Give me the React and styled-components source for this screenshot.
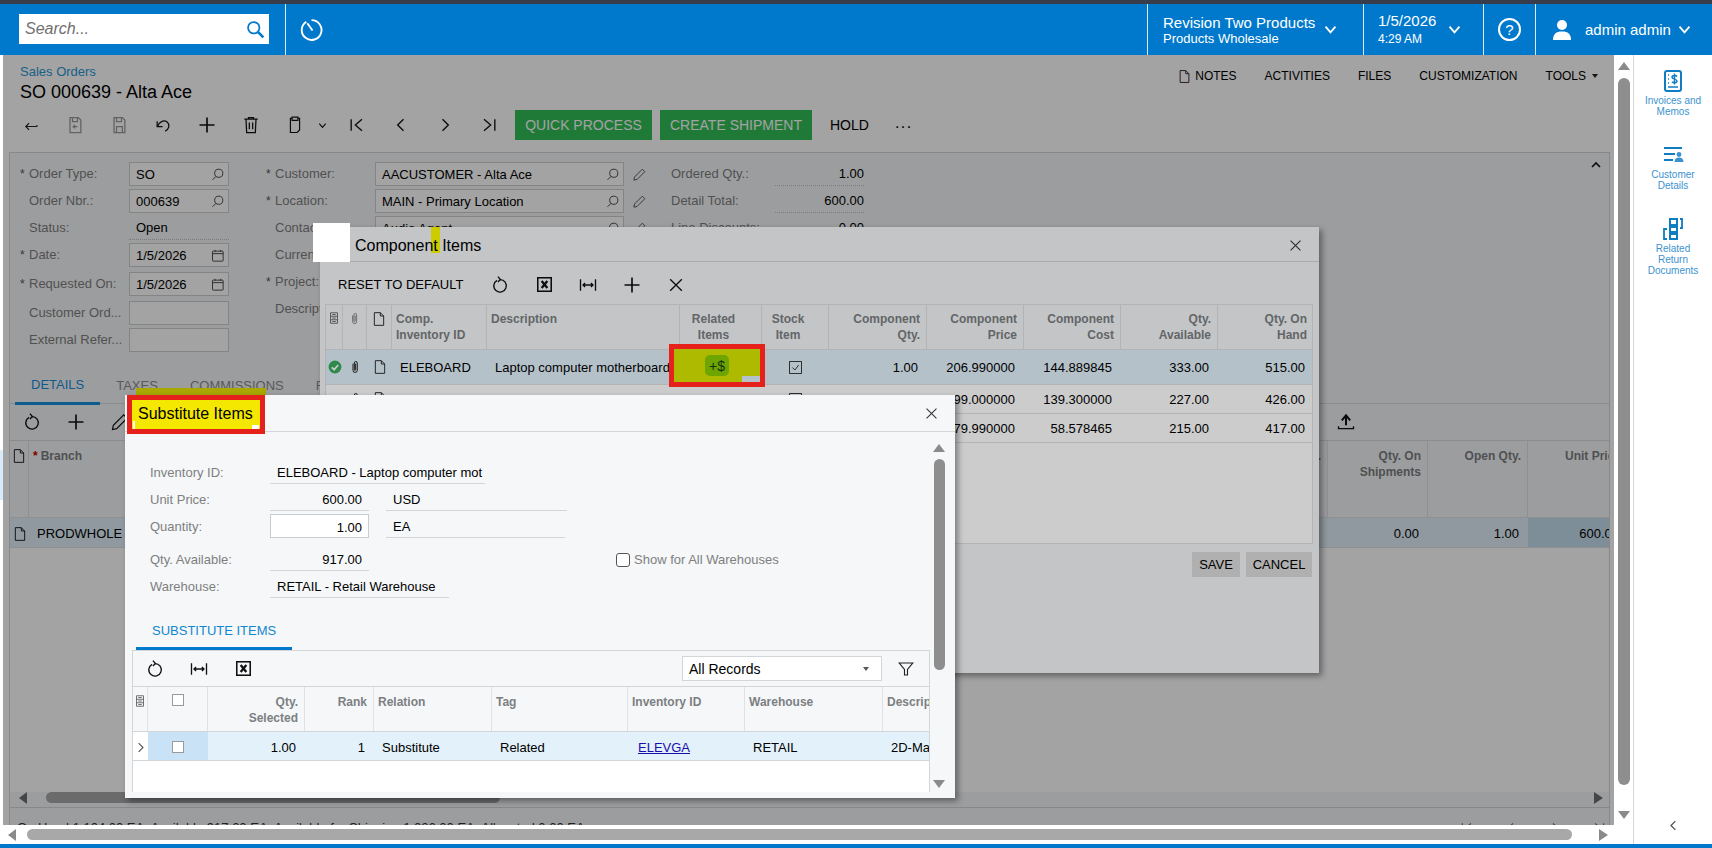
import React from 'react';
import styled, { createGlobalStyle } from 'styled-components';

const Global = createGlobalStyle`
  html, body { margin: 0; padding: 0; background: #fff; overflow: hidden; }
  * { box-sizing: border-box; }
  body { font-family: "Liberation Sans", Arial, sans-serif; font-size: 13px; color: #000; }
`;

const Screen = styled.div`width: 1712px; height: 848px; display: flex; flex-direction: column; overflow: hidden;`;
const TopStrip = styled.div`height: 4px; background: #383d49; flex: none;`;
const Header = styled.header`height: 51px; flex: none; background: #0079cc; display: flex; align-items: stretch; color: #fff;`;
const SearchWrap = styled.div`margin: 10px 16px 11px 19px; width: 250px; height: 30px; background: #fff; display: flex; align-items: center; justify-content: space-between; padding: 0 3px 0 6px;`;
const SearchHint = styled.span`font-style: italic; font-size: 16px; color: #707070;`;
const HeadSection = styled.div`
  width: ${p => p.$w}px; flex: none; border-left: 1px solid rgba(255,255,255,.85);
  display: flex; align-items: center; justify-content: ${p => p.$center ? 'center' : 'flex-start'};
  padding-left: ${p => p.$pl || 0}px; gap: ${p => p.$gap || 0}px;
`;
const HeadSpacer = styled.div`flex: 1;`;
const HeadStack = styled.div`display: flex; flex-direction: column; width: ${p => p.$w}px; margin-top: ${p => p.$mt || 0}px;`;
const HeadMain = styled.span`font-size: ${p => p.$s || 15}px; line-height: ${p => p.$lh || 17}px; white-space: nowrap;`;
const UserSlot = styled.span`margin-right: 6px; display: flex;`;
const HelpRing = styled.span`width: 23px; height: 23px; border: 2px solid #fff; border-radius: 50%; display: flex; align-items: center; justify-content: center; font-size: 15px;`;

const Middle = styled.div`flex: 1; display: flex; min-height: 0;`;
const LeftStack = styled.div`width: 1614px; display: flex; flex-direction: column; flex: none;`;
const ContentRow = styled.div`height: 770px; display: flex; flex: none;`;
const Gutter = styled.div`width: 3px; flex: none; background: #fff; padding-top: 395px;`;
const GutterMark = styled.div`height: 50px; background: #d9ebf8;`;
const Content = styled.main`position: relative; flex: 1; background: #fff; overflow: hidden;`;

const PageHead = styled.div`height: 55px; display: flex; justify-content: space-between;`;
const Titles = styled.div`padding: 9px 0 0 17px;`;
const Crumb = styled.div`color: #2b97d6; font-size: 13px; line-height: 16px;`;
const Title = styled.h1`margin: 1px 0 0; font-size: 18px; font-weight: 400; line-height: 22px;`;
const TopLinks = styled.div`display: flex; gap: 28px; padding: 13px 16px 0 0; align-items: flex-start;`;
const TopLink = styled.span`font-size: 12px; line-height: 16px; display: flex; align-items: center; gap: ${p => p.$gap || 0}px;`;
const Caret = styled.i`
  display: inline-block; width: 0; height: 0; border-left: 3.5px solid transparent; border-right: 3.5px solid transparent;
  border-top: 4px solid ${p => p.$c || '#222'};
`;

const Toolbar = styled.div`height: 30px; display: flex; align-items: center; padding-left: 6px;`;
const ToolIcon = styled.span`width: ${p => p.$w || 44}px; height: 100%; flex: none; display: flex; align-items: center; justify-content: ${p => p.$start ? 'flex-start' : 'center'};`;
const GreenBtn = styled.span`
  height: 30px; width: ${p => p.$w}px; margin-left: ${p => p.$ml}px; background: #32c057; color: #fff; flex: none;
  display: flex; align-items: center; justify-content: center; font-size: 14px;
`;
const TextBtn = styled.span`font-size: 14px; margin-left: 18px;`;
const Dots = styled.span`margin-left: 26px; font-size: 16px; letter-spacing: 1.5px; font-weight: 400; line-height: 10px; margin-top: -4px;`;

const Panel = styled.section`margin: 12px 4px 0 6px; border: 1px solid #d6d6d6; background: #f6f7f9; height: 720px; display: flex; flex-direction: column;`;
const FormArea = styled.div`height: 214px; flex: none; display: flex; padding: 9px 5px 0 10px;`;
const FormCol = styled.div`width: ${p => p.$w}px; margin-left: ${p => p.$ml || 0}px; flex: none;`;
const FormRow = styled.div`height: 27px; margin-top: ${p => p.$mt || 0}px; display: flex; align-items: flex-start;`;
const Star = styled.span`width: 9px; flex: none; line-height: 24px; font-size: 12px; color: #555;`;
const Label = styled.span`width: ${p => p.$w}px; flex: none; color: #7f7f7f; line-height: 24px; white-space: nowrap; overflow: hidden;`;
const InputBox = styled.span`
  width: ${p => p.$w}px; height: 24px; flex: none; border: 1px solid #cfcfcf; background: #fff; padding: 0 3px 0 6px;
  display: flex; align-items: center; justify-content: space-between; white-space: nowrap;
`;
const PlainValue = styled.span`
  width: ${p => p.$w}px; height: 24px; flex: none; border-bottom: 1px dotted #c4c4c4; padding: 0 ${p => p.$right ? 0 : 7}px;
  display: flex; align-items: center; justify-content: ${p => p.$right ? 'flex-end' : 'flex-start'};
`;
const SideIcon = styled.span`margin-left: 7px; width: 16px; height: 24px; display: flex; align-items: center; justify-content: center;`;
const Collapse = styled.span`margin-left: auto; margin-top: -5px;`;

const TabBar = styled.div`height: 37px; flex: none; display: flex; padding-left: ${p => p.$pl}px; border-bottom: 1px solid ${p => p.$line || '#dcdcdc'};`;
const Tab = styled.span`
  padding: 0 16px; display: flex; align-items: center; font-size: 13px; height: ${p => p.$active ? '38px' : '37px'};
  color: ${p => p.$active ? '#1a8fdb' : '#8c8c8c'}; border-bottom: ${p => p.$active ? '3px solid #1592df' : 'none'}; white-space: nowrap;
`;
const GridTools = styled.div`height: 37px; flex: none; display: flex; align-items: center; border-bottom: 1px solid #dcdcdc;`;
const ToolEnd = styled.span`margin-left: auto; margin-right: 241px; display: flex;`;
const DataRow = styled.div`
  --cell-top: ${p => p.$tp || 0}px;
  display: grid; grid-template-columns: ${p => p.$cols}; height: ${p => p.$h}px; flex: none; background: ${p => p.$bg || 'transparent'};
  border-bottom: 1px solid ${p => p.$line || '#dfe2e5'};
`;
const HeadCell = styled.div`
  padding: var(--head-top, 6px) ${p => p.$center ? 14 : 6}px 0 ${p => p.$center ? 0 : 4}px;
  font-size: 12px; line-height: 16px; font-weight: 700; color: #7c7f82; text-align: ${p => p.$right ? 'right' : p.$center ? 'center' : 'left'};
  border-right: 1px solid #dfe2e5; white-space: pre-line; overflow: hidden; display: ${p => p.$icon ? 'flex' : 'block'};
  justify-content: center;
  ${p => p.$icon ? 'padding-left: 0; padding-right: 0;' : ''}
`;
const Cell = styled.div`
  display: flex; align-items: center; white-space: nowrap; overflow: hidden; background: ${p => p.$bg || 'transparent'};
  justify-content: ${p => p.$right ? 'flex-end' : p.$center ? 'center' : 'flex-start'};
  padding: var(--cell-top, 0) ${p => p.$right ? 9 : p.$center ? 0 : 8}px 0;
`;
const RedMark = styled.span`color: #c00; margin-right: 3px;`;
const GridFill = styled.div`flex: 1; min-height: 0;`;
const Grid = styled.div`flex: none; display: flex; flex-direction: column; background: #fff; height: 351px; overflow: hidden;`;
const HeadBg = styled.div`--head-top: 7px; display: contents;`;
const GridScroll = styled.div`height: 11px; flex: none; display: flex; align-items: center; padding-left: 9px; margin-bottom: 4px;`;
const ArrowH = styled.i`
  display: block; width: 0; height: 0; border-top: 6px solid transparent; border-bottom: 6px solid transparent; flex: none;
  ${p => p.$left ? `border-right: 8px solid ${p.$c || '#8a8a8a'};` : `border-left: 9px solid ${p.$c || '#8a8a8a'};`}
`;
const Thumb = styled.div`height: 11px; width: ${p => p.$w}px; margin-left: ${p => p.$ml}px; border-radius: 6px; background: #a8a8a8; flex: none;`;
const EndArrow = styled.span`margin-left: auto; margin-right: ${p => p.$mr}px; display: flex;`;
const StatusBar = styled.div`border-top: 1px solid #d6d6d6; padding: 12px 0 0 7px; display: flex; justify-content: space-between; line-height: 15px; color: #333; white-space: nowrap;`;
const Pager = styled.div`display: flex; gap: 28px; padding: 0 2px 0 0;`;

const Mask = styled.div`position: absolute; inset: 0; background: rgba(0,0,0,.2);`;
const Modal = styled.div`
  position: absolute; left: ${p => p.$l}px; top: ${p => p.$t}px; width: ${p => p.$w}px; height: ${p => p.$h}px;
  background: #f5f7f9; box-shadow: 3px 3px 6px rgba(0,0,0,.4); display: flex; flex-direction: column;
`;
const ModalHead = styled.div`
  height: ${p => p.$h}px; flex: none; border-bottom: 1px solid #d3d6d9; display: flex; align-items: center; justify-content: space-between;
  padding: 0 15px 0 ${p => p.$pl}px; font-size: 16px; position: relative;
`;
const Highlight = styled.i`position: absolute; left: 111px; top: 0; width: 9px; height: 26px; background: #ffff00;`;
const ModalTitle = styled.span`position: relative; margin-top: 3px;`;
const CloseSlot = styled.span`margin-top: ${p => p.$mt}px; display: flex;`;
const ModalTools = styled.div`height: 42px; flex: none; display: flex; align-items: center; padding: 3px 0 0 18px;`;
const ResetBtn = styled.span`font-size: 13px; width: 140px; white-space: nowrap;`;
const CompGrid = styled.div`margin: 0 6px 0 5px; height: 240px; flex: none; background: #fff; border: 1px solid #dfe2e5; display: flex; flex-direction: column; overflow: hidden;`;
const HeadWrap = styled.div`background: #f5f7f9; --head-top: ${p => p.$top || 6}px;`;
const ModalButtons = styled.div`display: flex; justify-content: flex-end; gap: 6px; padding: 8px 7px 0;`;
const GrayBtn = styled.span`height: 25px; width: ${p => p.$w}px; background: #dcdcdc; display: flex; align-items: center; justify-content: center;`;

const WhiteBlock = styled.div`position: absolute; left: 310px; top: 168px; width: 37px; height: 39px; background: #fff;`;
const OliveStrip = styled.div`position: absolute; left: 133px; top: 333px; width: 130px; height: 7px; background: #a8a800;`;
const RedBox = styled.div`
  position: absolute; left: 666px; top: 289px; width: 96px; height: 43px; border: 5px solid #e6211c; background: #aeba00;
  display: flex; align-items: center; justify-content: center;
  &::after { content: ''; position: absolute; right: 0; bottom: 0; width: 18px; height: 6px; background: #b5c2ca; }
`;
const Badge = styled.span`width: 24px; height: 21px; border-radius: 5px; background: #6ea500; display: flex; align-items: center; justify-content: center; font-size: 14px; color: #14330a;`;
const SubTitleBox = styled.div`
  position: relative; width: 138px; height: 39px; margin-bottom: -2px; border: 5px solid #e6211c; background: #f5e800;
  display: flex; align-items: center; padding-left: 6px; font-size: 16px; white-space: nowrap;
  &::after { content: ''; position: absolute; right: 1px; bottom: 0; width: 7px; height: 4px; background: #fff; }
  &::before { content: ''; position: absolute; left: 1px; bottom: 0; width: 2px; height: 8px; background: #fff; }
`;
const ModalBody = styled.div`flex: 1; display: flex; min-height: 0;`;
const BodyMain = styled.div`width: 805px; flex: none; display: flex; flex-direction: column;`;
const SubForm = styled.div`padding: 27px 0 0 25px; height: 182px; flex: none;`;
const SubRow = styled.div`height: 25px; margin-bottom: ${p => p.$mb ?? 2}px; display: flex; align-items: stretch;`;
const SubLabel = styled.span`width: 120px; flex: none; color: #7f7f7f; padding-top: 6px;`;
const SubValue = styled.span`
  width: ${p => p.$w}px; margin-left: ${p => p.$ml || 0}px; flex: none; border-bottom: 1px solid #d3d6d9; padding: 6px 7px 0; white-space: nowrap; overflow: hidden;
  text-align: ${p => p.$right ? 'right' : 'left'};
`;
const QtyBox = styled.span`width: 99px; height: 24px; margin-top: 1px; flex: none; background: #fff; border: 1px solid #c9cdd1; padding: 5px 6px 0; text-align: right;`;
const CheckWrap = styled.span`margin-left: 247px; display: flex; align-items: center; gap: 4px; color: #7f7f7f; margin-top: 2px;`;
const RoundCheck = styled.i`width: 14px; height: 14px; border: 1px solid #555; border-radius: 3px; background: #fff; display: block;`;
const SubTabs = styled.div`height: 36px; flex: none; padding-left: 11px; display: flex;`;
const SubTab = styled.span`width: 156px; padding-left: 16px; display: flex; align-items: center; color: #1287cf; border-bottom: 3px solid #0079cc;`;
const SubGrid = styled.div`margin-left: 7px; width: 798px; height: 142px; flex: none; border: 1px solid #d3d6d9; border-bottom: none; display: flex; flex-direction: column; overflow: hidden; background: #fff;`;
const SubTools = styled.div`height: 36px; flex: none; background: #f5f7f9; display: flex; align-items: center; padding-left: 0; border-bottom: 1px solid #d3d6d9;`;
const SelectBox = styled.span`margin-left: auto; width: 200px; height: 25px; background: #fff; border: 1px solid #d3d6d9; display: flex; align-items: center; justify-content: space-between; padding: 0 12px 0 6px; font-size: 14px;`;
const FilterSlot = styled.span`width: 47px; display: flex; justify-content: center;`;
const CheckBox = styled.i`width: 12px; height: 12px; border: 1px solid #999; background: #fff; display: block;`;
const LinkText = styled.span`color: #1a0dab; text-decoration: underline; margin-left: 2px;`;
const ModalScroll = styled.div`width: 12px; margin-left: 3px; flex: none; padding-top: 12px; display: flex; flex-direction: column; align-items: center;`;
const ArrowUp = styled.i`display: block; width: 0; height: 0; border-left: 6.5px solid transparent; border-right: 6.5px solid transparent; border-bottom: 8px solid #8a8a8a; flex: none;`;
const ArrowDown = styled.i`display: block; width: 0; height: 0; border-left: 6.5px solid transparent; border-right: 6.5px solid transparent; border-top: 8px solid #8a8a8a; flex: none; margin-top: ${p => p.$mt}px;`;
const VThumb = styled.div`width: ${p => p.$w || 11}px; height: ${p => p.$h}px; margin-top: ${p => p.$mt}px; border-radius: 6px; background: #8e8e8e; flex: none;`;

const HScroll = styled.div`height: 11px; margin-top: 4px; display: flex; align-items: center; padding-left: 8px; background: #fff;`;
const VScroll = styled.div`width: 19px; flex: none; display: flex; flex-direction: column; align-items: center; padding-top: 7px; background: #fff;`;
const Rail = styled.aside`flex: 1; border-left: 1px solid #d4d8dc; display: flex; flex-direction: column; align-items: center; padding-top: 14px; background: #fff;`;
const RailItem = styled.div`height: 74px; width: 100%; display: flex; flex-direction: column; align-items: center; color: #3b92d0; font-size: 10px; line-height: 11px; text-align: center; white-space: pre-line; gap: 3px;`;
const RailIcon = styled.span`height: 23px; display: flex; align-items: center; justify-content: center;`;
const RailEnd = styled.div`margin-top: auto; margin-bottom: 11px;`;
const BottomBlue = styled.div`height: 4px; flex: none; background: #0079cc;`;

const Svg = styled.svg.attrs({ viewBox: '0 0 24 24', fill: 'none' })`
  width: ${p => p.$s || 20}px; height: ${p => p.$s || 20}px; stroke: ${p => p.$c || '#111'}; stroke-width: ${p => p.$w || 1.6}; flex: none; display: block;
`;
const I = {
  back: <path d="M20 14H5M9.500 9.500 5 14l4.500 4.500M20 14v-2" />,
  saveBack: <><path d="M6 3h10l3 3v15H6z" /><path d="M9 3v5h6V3M15 14h-5l2-2m-2 2 2 2" /></>,
  save: <><path d="M6 3h10l3 3v15H6z" /><path d="M9 3v5h6V3M9 21v-7h7v7" /></>,
  undo: <><path d="M5.500 14C7 8 13 5.500 17 8.500c3.500 3 2.500 8.500-2.500 11" /><path d="M5 7.500V14h6.500" /></>,
  plus: <path d="M12 3v18M3 12h18" />,
  trash: <><path d="M4 5h16M9 5V3h6v2M6 5l.8 16h10.400L18 5M10 9v8M14 9v8" /></>,
  clip: <><path d="M8.500 4H6.500v17h8l3-3V4h-2" /><path d="M8.500 2.500h7v4h-7z" /></>,
  first: <path d="M5 5v14M18 5l-8 7 8 7" />,
  prev: <path d="M15 5l-7 7 7 7" />,
  next: <path d="M9 5l7 7-7 7" />,
  last: <path d="M19 5v14M6 5l8 7-8 7" />,
  refresh: <><path d="M8.500 6.400A7.500 7.500 0 1 0 12 5.500" /><path d="M9.500 2l3 3.500-3 3" /></>,
  pencil: <path d="M16.500 3.500l4 4L8 20l-5 1 1-5z" />,
  excel: <><rect x="2.500" y="2.500" width="19" height="19" strokeWidth="2.200" /><path d="M8 7l8 10M16 7L8 17" strokeWidth="3.200" /></>,
  fit: <path d="M3 5v14M21 5v14M6 12h12M8.500 9.500 6 12l2.500 2.500M15.500 9.500 18 12l-2.500 2.500" />,
  x: <path d="M5 5l14 14M19 5L5 19" />,
  note: <path d="M5 2.500h9l5 5v14H5zM14 2.500v5h5" />,
  clipAttach: <path d="M9 7v10a3.200 3.200 0 0 0 6.400 0V6a2.200 2.200 0 0 0-4.400 0v10a1 1 0 0 0 2 0V7" />,
  lens: <><circle cx="14" cy="10" r="6.500" /><path d="M9.500 15 4 20.500" /></>,
  cal: <><rect x="4" y="5" width="17" height="16" rx="1" /><path d="M4 9h17M8 3v3M17 3v3" /></>,
  chevD: <path d="M5 8l7 8 7-8" />,
  chevU: <path d="M6 15l6-6 6 6" />,
  chevL: <path d="M15 5l-7 7 7 7" />,
  chevR: <path d="M9 5l7 7-7 7" />,
  upload: <><path d="M12 16V5M7 10l5-6 5 6" strokeWidth="2.400" /><path d="M3 17v3h18v-3" /></>,
  filter: <path d="M3 4h18l-7 8.500V20h-4v-7.500z" />,
  stack: <path d="M6 3h12v18H6zM6 9h12M6 15h12M9 6h6M9 12h6M9 18h6" />,
  timer: <><path d="M7 4.500a9.500 9.500 0 1 0 5-1.500" /><path d="M8 6l5 7" strokeWidth="1.800" /></>,
  search: <><circle cx="10" cy="10" r="6.500" /><path d="M15 15l6 6" strokeWidth="3" /></>,
  invoice: <><rect x="4" y="2" width="16" height="20" rx="2" strokeWidth="2" /><path d="M7 6h1M7 10h1M7 14h1M7 18h10" strokeWidth="1.600" /><path d="M16 7.500c-1-1.500-5-1.500-5 .7s5 1.600 5 3.800-4 2-5 .7M13.500 4.500v11" strokeWidth="1.500" /></>,
  customer: <><path d="M3 5h18M3 11h11M3 17h9" strokeWidth="1.800" /><circle cx="18" cy="11.500" r="2.400" fill="currentColor" strokeWidth="0" /><path d="M13.500 19c0-3 2-4.400 4.500-4.400s4.500 1.400 4.500 4.400z" fill="currentColor" strokeWidth="0" /></>,
  related: <><rect x="9" y="2" width="7" height="6" strokeWidth="2" /><rect x="9" y="10" width="7" height="5" strokeWidth="2" /><rect x="9" y="17" width="7" height="5" strokeWidth="2" /><path d="M19 2h2v9h-2M6 12H3v10h3" strokeWidth="1.800" /></>,
};
const Ic = ({ n, ...p }) => <Svg {...p}>{I[n]}</Svg>;
const UserGlyph = () => (
  <Svg $s={24} $c="none" $w={0}>
    <circle cx="12" cy="7" r="5" fill="#fff" />
    <path d="M3 22c0-6 3-8.500 9-8.500s9 2.500 9 8.500z" fill="#fff" />
  </Svg>
);
const CheckGlyph = () => (
  <Svg $s={14} $c="none" $w={0}>
    <circle cx="12" cy="12" r="11" fill="#39ad5e" />
    <path d="M6.500 12.500l4 4 7-8" stroke="#fff" strokeWidth="3" fill="none" />
  </Svg>
);
const StockCheck = () => (
  <Svg $s={15} $c="#222" $w={1.400}>
    <rect x="2.500" y="2.500" width="19" height="19" />
    <path d="M7 12l4 4 6-8" />
  </Svg>
);

const compCols = '17px 24px 25px 95px 193px 82px 67px 98px 97px 97px 97px 96px';
const compRows = [
  { h: 35, bg: '#e3f2fc', id: 'ELEBOARD', desc: 'Laptop computer motherboard', check: true, vals: ['1.00', '206.990000', '144.889845', '333.00', '515.00'] },
  { h: 29, id: 'ELEOPU', desc: 'Intel CPU, 2.2GHz', vals: ['1.00', '199.000000', '139.300000', '227.00', '426.00'] },
  { h: 29, id: 'ELEVGA', desc: 'Video card', vals: ['1.00', '79.990000', '58.578465', '215.00', '417.00'] },
];
const subCols = '15px 60px 97px 69px 118px 136px 117px 138px 100px';
const mainCols = '19px 1180px 119px 100px 100px 100px';

const left1 = [
  { star: true, label: 'Order Type:', val: 'SO', icon: 'lens' },
  { label: 'Order Nbr.:', val: '000639', icon: 'lens' },
  { label: 'Status:', plain: 'Open' },
  { star: true, label: 'Date:', val: '1/5/2026', icon: 'cal' },
  { star: true, label: 'Requested On:', val: '1/5/2026', icon: 'cal', mt: 2 },
  { label: 'Customer Ord...', val: '', mt: 2 },
  { label: 'External Refer...', val: '' },
];
const left2 = [
  { star: true, label: 'Customer:', val: 'AACUSTOMER - Alta Ace', icon: 'lens', pen: true },
  { star: true, label: 'Location:', val: 'MAIN - Primary Location', icon: 'lens', pen: true },
  { label: 'Contact:', val: 'Audio Agent', icon: 'lens', pen: true },
  { label: 'Currency:', val: 'USD' },
  { star: true, label: 'Project:', val: 'X' },
  { label: 'Description:', val: '' },
];
const left3 = [['Ordered Qty.:', '1.00'], ['Detail Total:', '600.00'], ['Line Discounts:', '0.00']];
const topTools = [['back', '#222', 18], ['saveBack', '#9a9a9a', 20], ['save', '#9a9a9a', 20], ['undo', '#111', 20], ['plus', '#111', 20], ['trash', '#111', 20]];

export default function App() {
  return (
    <Screen>
      <Global />
      <TopStrip />
      <Header>
        <SearchWrap>
          <SearchHint>Search...</SearchHint>
          <Ic n="search" $c="#0079cc" $s={21} $w={2} />
        </SearchWrap>
        <HeadSection $w={52} $center><Ic n="timer" $c="#fff" $s={25} $w={1.8} /></HeadSection>
        <HeadSpacer />
        <HeadSection $w={216} $pl={15} $gap={6}>
          <HeadStack $w={153}>
            <HeadMain>Revision Two Products</HeadMain>
            <HeadMain $s={13} $lh={15}>Products Wholesale</HeadMain>
          </HeadStack>
          <Ic n="chevD" $c="#fff" $s={17} $w={2.6} />
        </HeadSection>
        <HeadSection $w={120} $pl={14} $gap={15}>
          <HeadStack $w={53} $mt={2}>
            <HeadMain>1/5/2026</HeadMain>
            <HeadMain $s={12} $lh={20}>4:29 AM</HeadMain>
          </HeadStack>
          <Ic n="chevD" $c="#fff" $s={17} $w={2.6} />
        </HeadSection>
        <HeadSection $w={52} $center><HelpRing>?</HelpRing></HeadSection>
        <HeadSection $w={177} $pl={14} $gap={5}>
          <UserSlot><UserGlyph /></UserSlot>
          <HeadMain $s={15}>admin admin</HeadMain>
          <Ic n="chevD" $c="#fff" $s={17} $w={2.6} />
        </HeadSection>
      </Header>
      <Middle>
        <LeftStack>
          <ContentRow>
            <Gutter><GutterMark /></Gutter>
            <Content>
              <PageHead>
                <Titles>
                  <Crumb>Sales Orders</Crumb>
                  <Title>SO 000639 - Alta Ace</Title>
                </Titles>
                <TopLinks>
                  <TopLink $gap={3}><Ic n="note" $s={15} $c="#3a1a3a" $w={1.5} />NOTES</TopLink>
                  <TopLink>ACTIVITIES</TopLink>
                  <TopLink>FILES</TopLink>
                  <TopLink>CUSTOMIZATION</TopLink>
                  <TopLink $gap={6}>TOOLS<Caret /></TopLink>
                </TopLinks>
              </PageHead>
              <Toolbar>
                {topTools.map(([n, c, s]) => <ToolIcon key={n}><Ic n={n} $c={c} $s={s} $w={n === 'plus' ? 2 : 1.5} /></ToolIcon>)}
                <ToolIcon><Ic n="clip" $w={1.4} /></ToolIcon>
                <ToolIcon $w={18} $start><Ic n="chevD" $s={11} $w={2.4} /></ToolIcon>
                {['first', 'prev', 'next', 'last'].map(n => <ToolIcon key={n}><Ic n={n} /></ToolIcon>)}
                <GreenBtn $w={137} $ml={4}>QUICK PROCESS</GreenBtn>
                <GreenBtn $w={152} $ml={8}>CREATE SHIPMENT</GreenBtn>
                <TextBtn>HOLD</TextBtn>
                <Dots>...</Dots>
              </Toolbar>
              <Panel>
                <FormArea>
                  <FormCol $w={219}>
                    {left1.map(r => (
                      <FormRow key={r.label} $mt={r.mt}>
                        <Star>{r.star ? '*' : ''}</Star>
                        <Label $w={100}>{r.label}</Label>
                        {r.plain ? <PlainValue $w={100}>{r.plain}</PlainValue> : (
                          <InputBox $w={100}>{r.val}{r.icon && <Ic n={r.icon} $s={15} $c="#444" $w={1.5} />}</InputBox>
                        )}
                      </FormRow>
                    ))}
                  </FormCol>
                  <FormCol $w={384} $ml={27}>
                    {left2.map(r => (
                      <FormRow key={r.label}>
                        <Star>{r.star ? '*' : ''}</Star>
                        <Label $w={100}>{r.label}</Label>
                        <InputBox $w={249}>{r.val}{r.icon && <Ic n={r.icon} $s={15} $c="#444" $w={1.5} />}</InputBox>
                        {r.pen && <SideIcon><Ic n="pencil" $s={15} $c="#444" $w={1.4} /></SideIcon>}
                      </FormRow>
                    ))}
                  </FormCol>
                  <FormCol $w={193} $ml={21}>
                    {left3.map(([l, v]) => (
                      <FormRow key={l}>
                        <Label $w={104}>{l}</Label>
                        <PlainValue $w={89} $right>{v}</PlainValue>
                      </FormRow>
                    ))}
                  </FormCol>
                  <Collapse><Ic n="chevU" $s={16} $w={2.4} /></Collapse>
                </FormArea>
                <TabBar $pl={5}>
                  <Tab $active>DETAILS</Tab>
                  <Tab>TAXES</Tab>
                  <Tab>COMMISSIONS</Tab>
                  <Tab>FINANCIAL</Tab>
                </TabBar>
                <GridTools>
                  <ToolIcon><Ic n="refresh" /></ToolIcon>
                  <ToolIcon><Ic n="plus" $w={2} /></ToolIcon>
                  <ToolIcon><Ic n="pencil" $w={1.4} /></ToolIcon>
                  <ToolEnd><ToolIcon><Ic n="upload" /></ToolIcon></ToolEnd>
                </GridTools>
                <Grid>
                  <HeadBg>
                    <DataRow $cols={mainCols} $h={77} $bg="#f6f7f9">
                      <HeadCell $icon><Ic n="note" $s={16} $c="#222" $w={1.5} /></HeadCell>
                      <HeadCell><RedMark>*</RedMark>Branch</HeadCell>
                      <HeadCell $right>Qty.</HeadCell>
                      <HeadCell $right>{'Qty. On\nShipments'}</HeadCell>
                      <HeadCell $right>Open Qty.</HeadCell>
                      <HeadCell $right>Unit Price</HeadCell>
                    </DataRow>
                  </HeadBg>
                  <DataRow $cols={mainCols} $h={30} $bg="#e3f1fa" $tp={2}>
                    <Cell $center><Ic n="note" $s={16} $c="#222" $w={1.5} /></Cell>
                    <Cell>PRODWHOLE</Cell>
                    <Cell />
                    <Cell $right>0.00</Cell>
                    <Cell $right>1.00</Cell>
                    <Cell $right $bg="#c6dfef">600.00</Cell>
                  </DataRow>
                  <GridFill />
                </Grid>
                <GridScroll>
                  <ArrowH $left $c="#6f6f6f" />
                  <Thumb $w={454} $ml={19} />
                  <EndArrow $mr={6}><ArrowH $c="#6f6f6f" /></EndArrow>
                </GridScroll>
                <StatusBar>
                  <span>On Hand 1,104.00 EA, Available 917.00 EA, Available for Shipping 1,026.00 EA, Allocated 0.00 EA</span>
                  <Pager>
                    {['first', 'prev', 'next', 'last'].map(n => <Ic key={n} n={n} $s={16} $c="#666" />)}
                  </Pager>
                </StatusBar>
              </Panel>

              <Mask />
              <Modal $l={317} $t={172} $w={999} $h={446}>
                <ModalHead $h={35} $pl={35}>
                  <Highlight />
                  <ModalTitle>Component Items</ModalTitle>
                  <CloseSlot $mt={2}><Ic n="x" $s={17} $c="#333" $w={1.5} /></CloseSlot>
                </ModalHead>
                <ModalTools>
                  <ResetBtn>RESET TO DEFAULT</ResetBtn>
                  {['refresh', 'excel', 'fit', 'plus', 'x'].map(n => (
                    <ToolIcon key={n}><Ic n={n} $w={n === 'plus' ? 2 : 1.6} $s={n === 'excel' ? 17 : 20} /></ToolIcon>
                  ))}
                </ModalTools>
                <CompGrid>
                  <HeadWrap>
                    <DataRow $cols={compCols} $h={45}>
                      <HeadCell $icon><Ic n="stack" $s={14} $c="#666" /></HeadCell>
                      <HeadCell $icon><Ic n="clipAttach" $s={15} $c="#8a8a8a" /></HeadCell>
                      <HeadCell $icon><Ic n="note" $s={16} $c="#222" $w={1.4} /></HeadCell>
                      <HeadCell>{'Comp.\nInventory ID'}</HeadCell>
                      <HeadCell>Description</HeadCell>
                      <HeadCell $center>{'Related\nItems'}</HeadCell>
                      <HeadCell $center>{'Stock\nItem'}</HeadCell>
                      <HeadCell $right>{'Component\nQty.'}</HeadCell>
                      <HeadCell $right>{'Component\nPrice'}</HeadCell>
                      <HeadCell $right>{'Component\nCost'}</HeadCell>
                      <HeadCell $right>{'Qty.\nAvailable'}</HeadCell>
                      <HeadCell $right>{'Qty. On\nHand'}</HeadCell>
                    </DataRow>
                  </HeadWrap>
                  {compRows.map(r => (
                    <DataRow key={r.id} $cols={compCols} $h={r.h} $bg={r.bg}>
                      <Cell $center>{r.check && <CheckGlyph />}</Cell>
                      <Cell $center><Ic n="clipAttach" $s={16} $c="#222" $w={1.5} /></Cell>
                      <Cell $center><Ic n="note" $s={16} $c="#222" $w={1.4} /></Cell>
                      <Cell>{r.id}</Cell>
                      <Cell>{r.desc}</Cell>
                      <Cell />
                      <Cell $center><StockCheck /></Cell>
                      {r.vals.map((v, i) => <Cell key={i} $right>{v}</Cell>)}
                    </DataRow>
                  ))}
                </CompGrid>
                <ModalButtons>
                  <GrayBtn $w={48}>SAVE</GrayBtn>
                  <GrayBtn $w={66}>CANCEL</GrayBtn>
                </ModalButtons>
              </Modal>

              <Mask />
              <WhiteBlock />
              <OliveStrip />
              <RedBox><Badge>+$</Badge></RedBox>

              <Modal $l={122} $t={340} $w={830} $h={403}>
                <ModalHead $h={37} $pl={2}>
                  <SubTitleBox>Substitute Items</SubTitleBox>
                  <CloseSlot $mt={1}><Ic n="x" $s={17} $c="#333" $w={1.5} /></CloseSlot>
                </ModalHead>
                <ModalBody>
                  <BodyMain>
                    <SubForm>
                      <SubRow>
                        <SubLabel>Inventory ID:</SubLabel>
                        <SubValue $w={215}>ELEBOARD - Laptop computer mot</SubValue>
                      </SubRow>
                      <SubRow>
                        <SubLabel>Unit Price:</SubLabel>
                        <SubValue $w={99} $right>600.00</SubValue>
                        <SubValue $w={181} $ml={17}>USD</SubValue>
                      </SubRow>
                      <SubRow $mb={8}>
                        <SubLabel>Quantity:</SubLabel>
                        <QtyBox>1.00</QtyBox>
                        <SubValue $w={179} $ml={17}>EA</SubValue>
                      </SubRow>
                      <SubRow>
                        <SubLabel>Qty. Available:</SubLabel>
                        <SubValue $w={99} $right>917.00</SubValue>
                        <CheckWrap><RoundCheck />Show for All Warehouses</CheckWrap>
                      </SubRow>
                      <SubRow>
                        <SubLabel>Warehouse:</SubLabel>
                        <SubValue $w={179}>RETAIL - Retail Warehouse</SubValue>
                      </SubRow>
                    </SubForm>
                    <SubTabs><SubTab>SUBSTITUTE ITEMS</SubTab></SubTabs>
                    <SubGrid>
                      <SubTools>
                        <ToolIcon><Ic n="refresh" /></ToolIcon>
                        <ToolIcon><Ic n="fit" /></ToolIcon>
                        <ToolIcon><Ic n="excel" $s={17} /></ToolIcon>
                        <SelectBox>All Records<Caret $c="#555" /></SelectBox>
                        <FilterSlot><Ic n="filter" $s={18} $c="#222" $w={1.5} /></FilterSlot>
                      </SubTools>
                      <HeadWrap $top={7}>
                        <DataRow $cols={subCols} $h={45} $line="#d3d6d9">
                          <HeadCell $icon><Ic n="stack" $s={14} $c="#666" /></HeadCell>
                          <HeadCell $icon><CheckBox /></HeadCell>
                          <HeadCell $right>{'Qty.\nSelected'}</HeadCell>
                          <HeadCell $right>Rank</HeadCell>
                          <HeadCell>Relation</HeadCell>
                          <HeadCell>Tag</HeadCell>
                          <HeadCell>Inventory ID</HeadCell>
                          <HeadCell>Warehouse</HeadCell>
                          <HeadCell>Description</HeadCell>
                        </DataRow>
                      </HeadWrap>
                      <DataRow $cols={subCols} $h={29} $bg="#e3f1fa" $line="#d3d6d9" $tp={2}>
                        <Cell $center $bg="#fff"><Ic n="chevR" $s={15} $c="#555" $w={1.8} /></Cell>
                        <Cell $center $bg="#c9e2f5"><CheckBox /></Cell>
                        <Cell $right>1.00</Cell>
                        <Cell $right>1</Cell>
                        <Cell>Substitute</Cell>
                        <Cell>Related</Cell>
                        <Cell><LinkText>ELEVGA</LinkText></Cell>
                        <Cell>RETAIL</Cell>
                        <Cell>2D-Max Video</Cell>
                      </DataRow>
                    </SubGrid>
                  </BodyMain>
                  <ModalScroll>
                    <ArrowUp />
                    <VThumb $h={211} $mt={7} />
                    <ArrowDown $mt={110} />
                  </ModalScroll>
                </ModalBody>
              </Modal>
            </Content>
          </ContentRow>
          <HScroll>
            <ArrowH $left />
            <Thumb $w={1545} $ml={11} />
            <EndArrow $mr={6}><ArrowH /></EndArrow>
          </HScroll>
        </LeftStack>
        <VScroll>
          <ArrowUp />
          <VThumb $w={12} $h={707} $mt={8} />
          <ArrowDown $mt={26} />
        </VScroll>
        <Rail>
          <RailItem><RailIcon><Ic n="invoice" $s={24} $c="#0f7cc4" /></RailIcon>{'Invoices and\nMemos'}</RailItem>
          <RailItem><RailIcon><Ic n="customer" $s={24} $c="#0f7cc4" /></RailIcon>{'Customer\nDetails'}</RailItem>
          <RailItem><RailIcon><Ic n="related" $s={24} $c="#0f7cc4" /></RailIcon>{'Related\nReturn\nDocuments'}</RailItem>
          <RailEnd><Ic n="chevL" $s={15} $c="#555" $w={2.2} /></RailEnd>
        </Rail>
      </Middle>
      <BottomBlue />
    </Screen>
  );
}
